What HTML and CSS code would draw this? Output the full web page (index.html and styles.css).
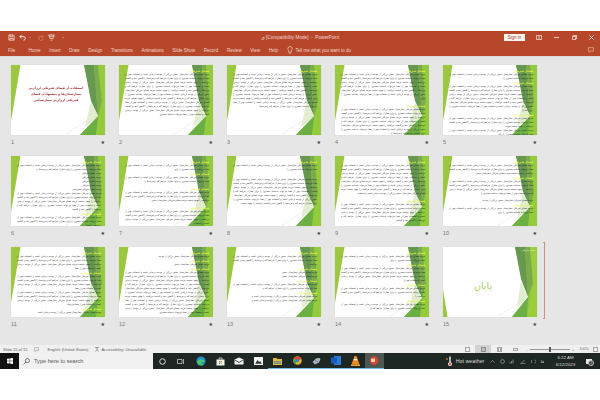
FILE: index.html
```html
<!DOCTYPE html>
<html lang="en">
<head>
<meta charset="UTF-8" />
<title>PowerPoint - Slide Sorter</title>
<link rel="stylesheet" href="styles.css">
</head>
<body>
<svg class="defs" width="0" height="0">
  <!-- shared slide theme -->
  <symbol id="theme" viewBox="0 0 94 70" preserveAspectRatio="none">
    <polygon points="0,0 9.500,0 0,56" fill="#9cc83f"/>
    <polygon points="73,0 94,0 94,70 69,70 87,51" fill="#8fc63f"/>
    <polygon points="73,0 83,0 87,51 80,36" fill="#66984f"/>
    <polygon points="83,0 87,0 91,36 87,51" fill="#7cab4c"/>
    <polygon points="69,70 87,51 85,70" fill="#6cb044"/>
    <polygon points="80,36 87,51 74,62" fill="#e2eed0"/>
    <polygon points="87,0 94,0 94,70 85,70 91,36" fill="#93cb3c"/>
    <line x1="54" y1="70" x2="78" y2="54" stroke="#dfe6d6" stroke-width=".5"/>
  </symbol>
  <symbol id="theme-end" viewBox="0 0 94 70" preserveAspectRatio="none">
    <polygon points="0,42 4.500,70 0,70" fill="#9cc83f"/>
    <polygon points="72,0 94,0 94,70 69,70 85,50" fill="#8fc63f"/>
    <polygon points="72,0 82,0 85,50 78,32" fill="#66984f"/>
    <polygon points="82,0 87,0 90,36 85,50" fill="#7cab4c"/>
    <polygon points="69,70 85,50 84,70" fill="#6cb044"/>
    <polygon points="78,34 85,50 74,60" fill="#e2eed0"/>
    <polygon points="87,0 94,0 94,70 84,70 90,36" fill="#9ace3c"/>
    <line x1="54" y1="70" x2="76" y2="56" stroke="#dfe6d6" stroke-width=".5"/>
  </symbol>
</svg>

<header class="titlebar">
  <div class="qat">
    <svg width="7" height="7" viewBox="0 0 8 8"><path d="M1 1h5l1 1v5H1zM2.500 1v2h3V1M2.200 7V5h3.600v2" fill="none" stroke="#f4ddd6" stroke-width=".9"/></svg>
    <svg width="7" height="7" viewBox="0 0 8 8"><path d="M3 1 1 3l2 2M1 3h4c3 0 3 4 0 4" fill="none" stroke="#fff" stroke-width="1"/></svg>
    <span class="caret"></span>
    <svg class="redo" width="6" height="6" viewBox="0 0 8 8"><path d="M6.500 2.500A3 3 0 1 0 7 5M6.500 .8v2H4.600" fill="none" stroke="#dd9a85" stroke-width=".9"/></svg>
    <svg width="7" height="7" viewBox="0 0 8 8"><path d="M1 1h6v1.500H1zM2 2.500v2.500h4V2.500M3 7h2" fill="none" stroke="#f4ddd6" stroke-width=".9"/></svg>
    <span class="caret last"></span>
  </div>
  <div class="doc-title">ي [Compatibility Mode]  -  PowerPoint</div>
  <div class="win">
    <span class="signin">Sign in</span>
    <svg width="6" height="5" viewBox="0 0 6 5"><path d="M.4.400h5.200v4.200H.4zM3 .4v4.200" fill="none" stroke="#f6e2dc" stroke-width=".8"/></svg>
    <svg width="5" height="5" viewBox="0 0 5 5"><path d="M0 2.500h5" stroke="#fff" stroke-width=".7"/></svg>
    <svg width="5" height="5" viewBox="0 0 5 5"><path d="M.4 1.400h3.200v3.200H.4zM1.400 1.400V.4h3.200v3.200h-1" fill="none" stroke="#fff" stroke-width=".7"/></svg>
    <svg width="5" height="5" viewBox="0 0 5 5"><path d="M.3.300l4.400 4.400M4.700.300L.3 4.700" stroke="#fff" stroke-width=".7"/></svg>
  </div>
</header>
<nav class="ribbon">
  <span class="tab file">File</span>
  <span class="tab">Home</span>
  <span class="tab">Insert</span>
  <span class="tab">Draw</span>
  <span class="tab">Design</span>
  <span class="tab">Transitions</span>
  <span class="tab">Animations</span>
  <span class="tab">Slide Show</span>
  <span class="tab">Record</span>
  <span class="tab">Review</span>
  <span class="tab">View</span>
  <span class="tab">Help</span>
  <svg class="bulb" width="6" height="8" viewBox="0 0 6 9"><path d="M1.500 5.500C0 4 .3 .6 3 .6s3 3.400 1.500 4.900V7h-3zM2 8.300h2" fill="none" stroke="#f6e2dc" stroke-width=".7"/></svg>
  <span class="tell">Tell me what you want to do</span>
  <svg class="comment" width="6" height="6" viewBox="0 0 7 7"><path d="M.5.800h6v4H2.500L1.300 6.200V4.800H.5z" fill="none" stroke="#f0c9bd" stroke-width=".7"/></svg>
</nav>

<main class="sorter" id="sorter">
  <span class="drop-line"></span>
</main>

<footer class="status">
  <span class="slide-count">Slide 15 of 15</span>
  <svg class="notes" width="6" height="5" viewBox="0 0 6 5"><path d="M.4.400h4v3h-2L1 4.600V3.400H.4z" fill="none" stroke="#888" stroke-width=".5"/></svg>
  <span class="lang">English (United States)</span>
  <svg class="access" width="6" height="6" viewBox="0 0 6 6"><path d="M1 1.500h4M3 1.500v2L1.500 5.500M3 3.500l1.500 2" fill="none" stroke="#666" stroke-width=".6"/></svg>
  <span>Accessibility: Unavailable</span>
  <div class="views">
    <span class="view"><i class="ico normal"></i></span>
    <span class="view active"><i class="ico grid"></i></span>
    <span class="view"><i class="ico reading"></i></span>
    <span class="view"><i class="ico show"></i></span>
  </div>
  <div class="zoom">
    <span class="zoom-sign">-</span>
    <span class="zoom-track"><i class="zoom-thumb"></i></span>
    <span class="zoom-sign">+</span>
    <span class="zoom-value">100%</span>
    <i class="ico fit"></i>
  </div>
</footer>

<div class="taskbar">
  <div class="start">
    <svg width="6" height="6" viewBox="0 0 6 6"><path d="M0 .8l2.700-.4v2.400H0zM3.100.3L6 0v2.800H3.100zM0 3.200h2.700v2.400L0 5.200zM3.100 3.200H6V6l-2.900-.4z" fill="#fff"/></svg>
  </div>
  <div class="search">
    <svg width="7" height="7" viewBox="0 0 7 7"><circle cx="4.400" cy="2.600" r="2" fill="none" stroke="#444" stroke-width=".7"/><path d="M3 4 .6 6.400" stroke="#444" stroke-width=".7"/></svg>
    <span>Type here to search</span>
  </div>
  <div class="apps">
    <span class="app"><svg width="7" height="7" viewBox="0 0 7 7"><circle cx="3.500" cy="3.500" r="2.800" fill="none" stroke="#eee" stroke-width=".9"/></svg></span>
    <span class="app"><svg width="8" height="7" viewBox="0 0 8 7"><path d="M.5 1.500h4.500v4H.5zM6.500 1v5" fill="none" stroke="#ddd" stroke-width=".7"/></svg></span>
    <span class="app"><svg width="10" height="10" viewBox="0 0 10 10"><circle cx="5" cy="5" r="4.600" fill="#1b8fd0"/><path d="M1 6.500C1.500 3 7 2 8.500 5c.4 1.400-1.500 1.500-3 1.200-1 1 .8 2.800 3 1.500C7 10 2 10.500 1 6.500z" fill="#4cc46a"/></svg></span>
    <span class="app"><svg width="9" height="9" viewBox="0 0 9 9"><path d="M.5 2.500h8v6h-8z" fill="#f4f4f4"/><path d="M3 2.500V1h3v1.500" fill="none" stroke="#f4f4f4" stroke-width=".7"/><path d="M3 4h1.300v1.300H3z" fill="#e0502a"/><path d="M4.700 4H6v1.300H4.700z" fill="#7cb82f"/><path d="M3 5.700h1.300V7H3z" fill="#1f9ad6"/><path d="M4.700 5.700H6V7H4.700z" fill="#f6b900"/></svg></span>
    <span class="app"><svg width="10" height="8" viewBox="0 0 10 8"><path d="M.5 2.500 5 .5l4.500 2v5h-9z" fill="#f2f2f2"/><path d="M1 3 5 5.500 9 3" fill="none" stroke="#222" stroke-width=".8"/></svg></span>
    <span class="app"><svg width="9" height="8" viewBox="0 0 9 8"><path d="M0 0h9v8H0z" fill="#f2f2f2"/><path d="M1.200 6.800 3.500 3l1.700 2.200 1-1.200 1.600 2.800z" fill="#2b3230"/></svg></span>
    <span class="app on"><svg width="9" height="8" viewBox="0 0 9 8"><path d="M0 1h3.500l1 1H9v6H0z" fill="#e7b93a"/><path d="M1 4h7v3H1z" fill="#7f9a85"/></svg></span>
    <span class="app on"><svg width="9" height="9" viewBox="0 0 9 9"><circle cx="4.500" cy="4.500" r="4.300" fill="#e2b52a"/><path d="M4.500 4.500.6 3A4.300 4.300 0 0 1 8.500 3z" fill="#d8402f"/><path d="M4.500 4.500 2.300 8.200A4.300 4.300 0 0 1 .6 3z" fill="#3ea454"/><circle cx="4.500" cy="4.500" r="1.700" fill="#3b82d8"/></svg></span>
    <span class="app on"><svg width="9" height="8" viewBox="0 0 9 8"><path d="M.5 5 4 1.500c2-1 4-.5 4.500.5L7 5.500 3 7.500z" fill="#a9b6bd"/><path d="M3 3.500 6 5" stroke="#5d6b73" stroke-width=".7"/></svg></span>
    <span class="app on"><svg width="10" height="9" viewBox="0 0 10 9"><path d="M3 0h7v9H3z" fill="#2b7cd3"/><path d="M0 1.500h6v6H0z" fill="#185abd"/></svg></span>
    <span class="app on"><svg width="9" height="10" viewBox="0 0 9 10"><path d="M3.500 0h2l3 8.500h-8z" fill="#f08a1d"/><path d="M3 3h3l.4 1.200H2.600z" fill="#fff"/><path d="M0 8.500h9V10H0z" fill="#f4a63a"/></svg></span>
    <span class="app on active"><svg width="10" height="9" viewBox="0 0 10 9"><circle cx="5" cy="4.500" r="4.300" fill="#d8452a"/><path d="M2 2.500h4v3.500H2z" fill="#f9c9b8"/></svg></span>
  </div>
  <div class="tray">
    <svg class="therm" width="6" height="10" viewBox="0 0 6 10"><path d="M3.300.5h1.400v5.800a1.900 1.900 0 1 1-1.400 0z" fill="#e8eef2"/><circle cx="4" cy="8" r="1.200" fill="#e64a3b"/><path d="M0 3h2" stroke="#f0a040" stroke-width="1"/></svg>
    <span class="weather">Hot weather</span>
    <svg width="5" height="3" viewBox="0 0 5 3"><path d="M.4 2.700 2.500.5l2.100 2.200" fill="none" stroke="#ccc" stroke-width=".5"/></svg>
    <svg width="5" height="5" viewBox="0 0 5 5"><circle cx="2.500" cy="2.500" r="1.900" fill="none" stroke="#bbb" stroke-width=".6"/></svg>
    <svg width="6" height="5" viewBox="0 0 6 5"><path d="M1 3v1.500M2.500 2v2.500M4 .5v4" stroke="#aaa" stroke-width=".7"/></svg>
    <svg width="6" height="5" viewBox="0 0 6 5"><path d="M.4 4.500h5M1 4.500 4.500 1" stroke="#aaa" stroke-width=".6"/></svg>
    <svg width="6" height="5" viewBox="0 0 6 5"><path d="M1.500 1v3M4.500 1a1.500 1.500 0 0 1 0 3" fill="none" stroke="#aaa" stroke-width=".6"/></svg>
    <span class="ime" lang="fa">فا</span>
    <div class="clock"><span>6:22 AM</span><span>6/12/2023</span></div>
    <span class="notify"><i class="badge">1</i></span>
  </div>
</div>
<script src="script.js"></script>
</body>
</html>
```

FILE: styles.css
```css
/* General */
body {
  margin: 0;
  background: #fff;
  font-family: "Liberation Sans", Arial, sans-serif;
  padding-top: 31px;
}
.defs { position: absolute; }

/* Title bar */
.titlebar {
  display: grid;
  grid-template-columns: 1fr auto 1fr;
  align-items: center;
  height: 13px;
  background: #b7472a;
  color: #f3d8cf;
  font-size: 4.700px;
}
.qat {
  display: flex;
  align-items: center;
  gap: 4px;
  padding-left: 8px;
}
.caret {
  width: 0;
  height: 0;
  margin-left: -1px;
  margin-right: 3px;
  border-left: 1px solid transparent;
  border-right: 1px solid transparent;
  border-top: 1px solid #e6a994;
}
.caret.last { margin-left: 3px; }
.redo { opacity: .9; }
.doc-title { white-space: pre; }
.win {
  display: flex;
  align-items: center;
  justify-content: flex-end;
  gap: 12.500px;
  padding-right: 6px;
}
.signin {
  width: 21px;
  height: 7px;
  margin-right: -2px;
  line-height: 7px;
  text-align: center;
  background: #fbf3f0;
  color: #a3442c;
  font-size: 4.500px;
}

/* Ribbon */
.ribbon {
  display: flex;
  align-items: center;
  gap: 8.700px;
  height: 12px;
  padding-left: 8px;
  background: #b7472a;
  color: #f3d8cf;
  font-size: 4.500px;
}
.file { margin-right: 4.500px; }
.tell { margin-left: -6px; }
.comment { margin-left: auto; margin-right: 6px; }

/* Slide sorter */
.sorter {
  position: relative;
  display: grid;
  grid-template-columns: repeat(5, 94px);
  grid-auto-rows: 91px;
  column-gap: 14px;
  height: 289px;
  box-sizing: border-box;
  padding: 8px 11px 0;
  background: #e6e6e6;
  border-top: 1px solid #dedad8;
}
.slide {
  position: relative;
  height: 70px;
  background: #fff;
  overflow: hidden;
  box-shadow: 0 0 1px #cfcfcf;
}
.theme {
  position: absolute;
  left: 0;
  top: 0;
  width: 100%;
  height: 100%;
}
.meta {
  display: flex;
  justify-content: space-between;
  align-items: center;
  height: 6px;
  margin-top: 4px;
  color: #777;
  font-size: 5.500px;
}
.star {
  font-family: "DejaVu Sans", sans-serif;
  font-size: 5px;
  color: #444;
}
.body {
  position: relative;
  padding: 3.500px 4px 0 6px;
  font-family: "DejaVu Sans", sans-serif;
  font-size: 2.300px;
  line-height: 4px;
  color: #1d1d1d;
  text-align: justify;
}
.body h2 {
  margin: 0;
  font-size: 2.800px;
  font-weight: bold;
  color: #eef53a;
  text-align: right;
}
.body p { margin: 0; }
.body .gap { height: 3px; }
.cover-title {
  position: relative;
  margin: 0;
  padding: 20px 20px 0 16px;
  font-family: "DejaVu Sans", sans-serif;
  font-size: 3.300px;
  line-height: 6px;
  font-weight: bold;
  color: #a8333a;
  text-align: center;
}
.end-tag {
  position: absolute;
  right: 2px;
  top: 2px;
  font-family: "DejaVu Sans", sans-serif;
  font-size: 2.300px;
  color: #e9f2d8;
}
.end-title {
  position: relative;
  margin: 0;
  padding-top: 33px;
  padding-right: 14px;
  font-family: "DejaVu Sans", sans-serif;
  font-size: 9.500px;
  font-weight: normal;
  line-height: 12px;
  color: #a6cc5a;
  text-align: center;
}
.drop-line {
  position: absolute;
  left: 544px;
  top: 185px;
  width: 0;
  height: 77px;
  border-left: 1px solid #cf8f7d;
}
.drop-line::before,
.drop-line::after {
  content: "";
  position: absolute;
  left: -2px;
  width: 2px;
  height: 1px;
  background: #cf8f7d;
}
.drop-line::before { top: 0; }
.drop-line::after { bottom: 0; }

/* Status bar */
.status {
  display: flex;
  align-items: center;
  height: 8px;
  padding-left: 3px;
  background: #f0f0f0;
  color: #666;
  font-size: 4px;
}
.notes { margin: 0 7px 0 7px; }
.access { margin: 0 1px 0 6px; }
.views {
  display: flex;
  margin-left: auto;
}
.view {
  display: flex;
  align-items: center;
  justify-content: center;
  width: 16px;
  height: 8px;
}
.view.active { background: #d2d2d2; }
.ico {
  display: block;
  width: 5px;
  height: 5px;
  box-sizing: border-box;
  border: 1px solid #a5a5a5;
}
.ico.grid { border-color: #8f8f8f; background: #bdbdbd; }
.ico.reading { border-left-width: 2px; border-right-width: 2px; }
.ico.show { height: 3px; }
.zoom {
  display: flex;
  align-items: center;
  margin-left: 2px;
  padding-right: 2px;
}
.zoom-sign { width: 4px; text-align: center; color: #777; }
.zoom-track {
  position: relative;
  width: 40px;
  height: 1px;
  margin: 0 1px;
  background: #999;
}
.zoom-thumb {
  position: absolute;
  left: 19px;
  top: -2px;
  width: 1.500px;
  height: 5px;
  background: #555;
}
.zoom-value { margin: 0 4px 0 4px; font-size: 3.800px; color: #777; }

/* Taskbar */
.taskbar {
  display: flex;
  align-items: center;
  height: 16px;
  background: #1e2723;
  color: #e6e6e6;
}
.start {
  display: flex;
  align-items: center;
  justify-content: center;
  width: 19px;
  height: 16px;
  background: #111;
}
.search {
  display: flex;
  align-items: center;
  gap: 4px;
  width: 133.500px;
  height: 16px;
  box-sizing: border-box;
  padding-left: 4px;
  background: #f1f1f1;
  color: #555;
  font-size: 5.600px;
}
.apps { display: flex; }
.app {
  display: flex;
  align-items: center;
  justify-content: center;
  box-sizing: border-box;
  width: 19.300px;
  height: 16px;
}
.app.on { border-bottom: 1px solid #76b9ed; }
.app.active { background: #4d5752; }
.tray {
  display: flex;
  align-items: center;
  gap: 4.500px;
  margin-left: auto;
  height: 16px;
  padding-right: 8px;
}
.therm { margin-right: -1px; }
.weather { font-size: 5.300px; margin-right: 1.500px; color: #ddd; }
.ime { font-family: "DejaVu Sans", sans-serif; font-size: 4px; }
.clock {
  display: flex;
  flex-direction: column;
  align-items: center;
  width: 26px;
  margin: 0 3px 0 4px;
  font-size: 4.400px;
  line-height: 7px;
  color: #ddd;
}
.notify {
  position: relative;
  width: 6px;
  height: 5px;
  background: #e8e8e8;
}
.badge {
  position: absolute;
  right: -2px;
  bottom: -2px;
  width: 4px;
  height: 4px;
  border-radius: 50%;
  background: #333;
  border: .5px solid #ccc;
  font-size: 3px;
  line-height: 4px;
  font-style: normal;
  text-align: center;
  color: #fff;
}
```

FILE: script.js
```js
// filler for the tiny slide body text
const filler = "هزینه فضای فیزیکی بیمارستان بخش بزرگی از بودجه درمانی است و استفاده بهتر از فضا می‌تواند خدمات بیشتری را برای بیماران فراهم کند و هزینه‌ها را کاهش دهد و کیفیت مراقبت را بهبود ببخشد ";
const charsPerLine = 72;

// h = heading, g = small gap, number = lines of paragraph
const slides = [
  null,
  ["h", 11.5],
  ["h", 9.5],
  ["h", 6.6, "g", "h", 7],
  ["h", 1.5, "h", 6.7, "h", 2.6, 1.6],
  ["h", 2, .3, .3, .3, .3, .4, 4.8, "h", 2.5],
  ["h", 1.6, "h", 2, "g", "h", 3, "g", "h", 3.5],
  ["h", 1.5, "g", "g", 7.6],
  ["h", 8.5, "g", "h", 4.8],
  ["h", 3, "h", 4, "g", .7, "h", 1.6],
  ["h", 3.7, "h", 3.7, 3.8, "h", .8],
  ["h", .7, "h", .5, "h", 11.5],
  ["h", 2.4, "h", .5, .5, "h", 1.8, "h", .9, .9],
  ["h", 1.6, "h", 3.6, "h", 2.4, "h", 1.8],
  null
];

function paragraph(lines) {
  const n = Math.round(lines * charsPerLine);
  const text = filler.repeat(Math.ceil(n / filler.length) + 1).slice(0, n);
  return `<p>${text.slice(0, text.lastIndexOf(" "))}</p>`;
}

function slideBody(blocks, index) {
  if (index === 0) {
    return `<use href="#theme"/></svg><h1 class="cover-title">استفاده از فضای فیزیکی ارزان‌تر بیمارستان‌ها و پیشنهادی فضای فیزیکی ارزان‌تر بیمارستانی</h1>`;
  }
  if (index === 14) {
    return `<use href="#theme-end"/></svg><span class="end-tag">فضای فیزیکی</span><h2 class="end-title">پایان</h2>`;
  }
  const inner = blocks.map((b) => {
    if (b === "h") return "<h2>فضای فیزیکی</h2>";
    if (b === "g") return '<div class="gap"></div>';
    return paragraph(b);
  }).join("");
  return `<use href="#theme"/></svg><div class="body">${inner}</div>`;
}

const sorter = document.getElementById("sorter");
slides.forEach((blocks, i) => {
  const cell = document.createElement("div");
  cell.innerHTML = `
    <div class="slide" dir="rtl" lang="fa"><svg class="theme">${slideBody(blocks, i)}</div>
    <div class="meta"><span>${i + 1}</span><span class="star">★</span></div>`;
  sorter.appendChild(cell);
});
```
